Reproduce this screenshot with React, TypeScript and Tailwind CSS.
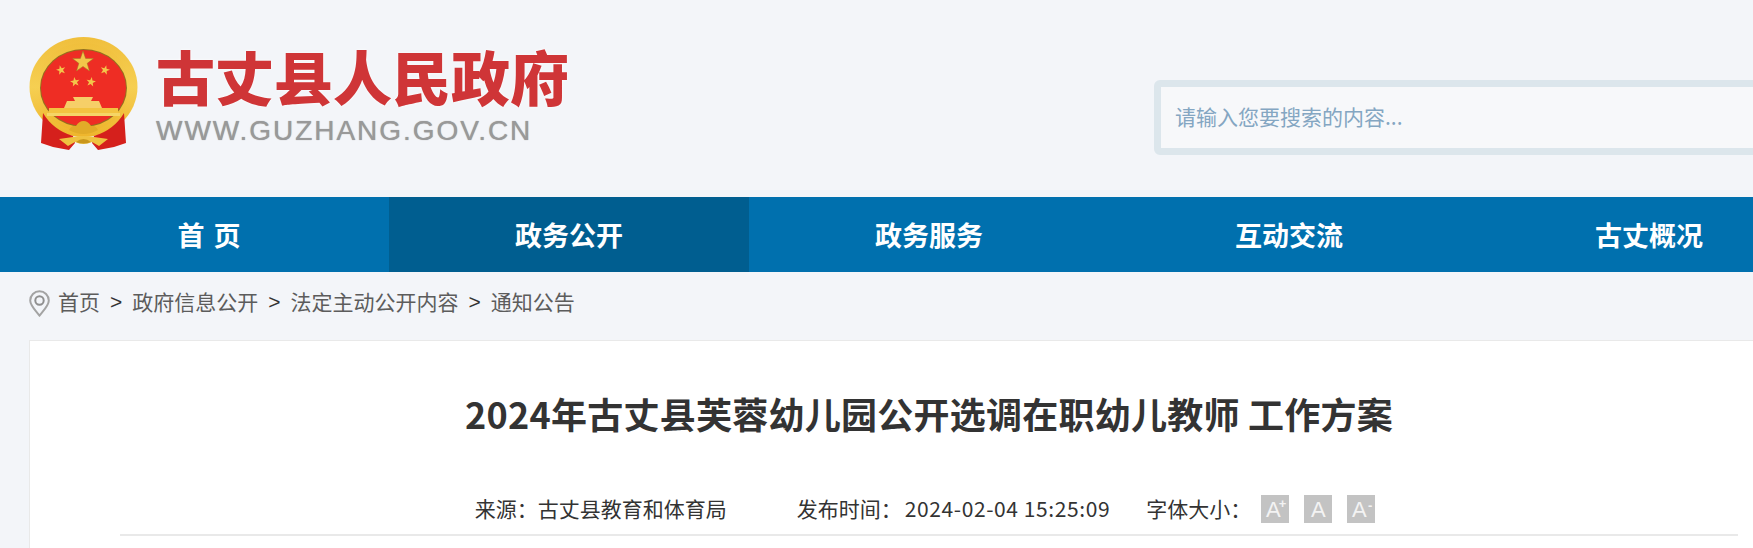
import React from "react";

const navItems = ["首 页", "政务公开", "政务服务", "互动交流", "古丈概况"];
const crumbs = ["首页", "政府信息公开", "法定主动公开内容", "通知公告"];

const star = (cx: number, cy: number, r: number, rot = 0) => {
  const pts: string[] = [];
  for (let i = 0; i < 10; i++) {
    const rad = i % 2 === 0 ? r : r * 0.4;
    const a = ((-90 + rot + i * 36) * Math.PI) / 180;
    pts.push(`${(cx + rad * Math.cos(a)).toFixed(2)},${(cy + rad * Math.sin(a)).toFixed(2)}`);
  }
  return pts.join(" ");
};

const Emblem = () => (
  <svg width="110" height="115" viewBox="0 0 110 115" className="shrink-0 blur-[0.5px]">
    <defs>
      <linearGradient id="gold" x1="0" y1="0" x2="0" y2="1">
        <stop offset="0" stopColor="#f0bf3c" />
        <stop offset="0.5" stopColor="#f6cf52" />
        <stop offset="1" stopColor="#eeb52c" />
      </linearGradient>
    </defs>
    {/* outer ring */}
    <ellipse cx="54.5" cy="50" rx="54" ry="50" fill="url(#gold)" />
    {/* ribbons */}
    <path d="M14 76 Q24 93 44 99 L46 106 L40 113 L24 110 L12 106 Z" fill="#d5201c" />
    <path d="M95 76 Q85 93 65 99 L63 106 L69 113 L85 110 L97 106 Z" fill="#d5201c" />
    {/* inner band and red field */}
    <ellipse cx="54.5" cy="50" rx="47" ry="44" fill="url(#gold)" />
    <ellipse cx="54.5" cy="51" rx="43.5" ry="39" fill="#93701f" />
    <ellipse cx="54.5" cy="51" rx="42.5" ry="38" fill="#ee2d24" />
    {/* stars */}
    <polygon points={star(54, 25, 11)} fill="#f3c64a" stroke="#9a7a22" strokeWidth="0.5" />
    <polygon points={star(32, 33, 5, -15)} fill="#f3c64a" />
    <polygon points={star(76, 33, 5, 15)} fill="#f3c64a" />
    <polygon points={star(46, 45, 5, -10)} fill="#f3c64a" />
    <polygon points={star(62, 45, 5, 10)} fill="#f3c64a" />
    {/* gate */}
    <path d="M44 60 L64 60 L62 64 L70 64 L73 71 L35 71 L38 64 L46 64 Z" fill="#f6cf68" />
    <rect x="20" y="71" width="69" height="5" fill="#f3c340" />
    <rect x="18" y="76" width="73" height="3" fill="#f5d566" />
    {/* wheel and sheaf */}
    <path d="M40 93 Q43 88 47 89 Q50 84 54.5 84 Q59 84 62 89 Q66 88 69 93 Q62 97 54.5 97 Q47 97 40 93 Z" fill="#e2ab28" />
    <path d="M30 102 L44 100 Q54.5 98 65 100 L79 102 L70 109 L63 105 Q54.5 109 46 105 L39 109 Z" fill="#efc240" />
    <path d="M47 105 Q54.5 99 62 105 Q54.5 108 47 105 Z" fill="#c9961c" />
  </svg>
);

const PinIcon = () => (
  <svg width="21" height="27" viewBox="0 0 21 27" className="shrink-0">
    <path d="M10.5 25.5 C6 20 1.2 15.5 1.2 10.5 A9.3 9.3 0 0 1 19.8 10.5 C19.8 15.5 15 20 10.5 25.5 Z" fill="none" stroke="#a3a3a3" strokeWidth="2" />
    <circle cx="10.5" cy="10.5" r="4.2" fill="none" stroke="#8f8f8f" strokeWidth="2" />
  </svg>
);

const FontButton = ({ sign }: { sign?: "+" | "-" }) => (
  <span className="relative flex h-[28px] w-[28px] items-center justify-center bg-[#c3c3c3] pt-[2px] text-[22px] leading-none text-[#f3f3f3] font-['Liberation_Sans',sans-serif]">
    <span className={sign ? "-ml-[4px]" : ""}>A</span>
    {sign && (
      <span className={`absolute right-[3px] text-[13px] font-bold leading-none ${sign === "-" ? "top-[4px]" : "top-[2px]"}`}>
        {sign}
      </span>
    )}
  </span>
);

export default function App() {
  return (
    <div className="h-[548px] w-[1753px] overflow-hidden bg-[#f3f5f9] font-['Noto_Sans_CJK_SC','Noto_Sans',sans-serif] text-[#333]">
      <div className="ml-[29px] w-[1800px]">
        <header className="flex h-[197px] items-start">
          <div className="mt-[37px] flex">
            <Emblem />
            <div className="ml-[17px] flex flex-col">
              <div className="mt-[-3px] h-[80px] text-[59px] font-black leading-[84px] whitespace-nowrap text-[#cf3537] [text-shadow:0_0_3px_#fff]">
                古丈县人民政府
              </div>
              <div className="mt-[1px] text-[28px] leading-[32px] tracking-[1.95px] whitespace-nowrap text-[#999] [text-shadow:0_0_1px_#999] font-['Liberation_Sans',sans-serif]">
                WWW.GUZHANG.GOV.CN
              </div>
            </div>
          </div>
          <div className="mt-[80px] ml-[585px] flex h-[75px] w-[660px] items-center rounded-[6px] border-[7px] border-[#dce6ec] bg-[#f7f8fa] pb-[2px] pl-[14px]">
            <span className="text-[21px] text-[#84a6c2]">请输入您要搜索的内容...</span>
          </div>
        </header>
      </div>

      <nav className="h-[75px] bg-[#0070ae] pl-[29px]">
        <ul className="flex w-[1800px]">
          {navItems.map((item, i) => (
            <li
              key={item}
              className={`flex h-[75px] w-[360px] items-center justify-center pt-[1px] text-[27px] font-bold text-white [word-spacing:3px] ${
                i === 1 ? "bg-[#005e90]" : ""
              }`}
            >
              {item}
            </li>
          ))}
        </ul>
      </nav>

      <div className="ml-[29px] w-[1800px]">
        <div className="flex h-[68px] items-center pb-[6px] text-[21px] text-[#5c5c5c]">
          <PinIcon />
          <span className="ml-[8px] -translate-y-px">{crumbs[0]}</span>
          {crumbs.slice(1).map((c) => (
            <React.Fragment key={c}>
              <span className="mx-[10px] -translate-y-px text-[#333] font-['Liberation_Sans',sans-serif]">&gt;</span>
              <span className="-translate-y-px">{c}</span>
            </React.Fragment>
          ))}
        </div>

        <main className="h-[300px] border border-[#e9e9e9] bg-white px-[90px]">
          <h1 className="mt-[44px] text-center text-[36px] font-bold leading-[56px] tracking-[0.25px] text-[#333]">
            2024年古丈县芙蓉幼儿园公开选调在职幼儿教师 工作方案
          </h1>
          <div className="mt-[41px] flex h-[54px] items-center justify-center border-b-2 border-[#e9e9e9] pt-[2px] pr-[8px] text-[21px] text-[#333]">
            <span>来源：古丈县教育和体育局</span>
            <span className="ml-[70px]">发布时间：</span>
            <span className="ml-[3px] tracking-[0.6px]">2024-02-04 15:25:09</span>
            <span className="ml-[36px]">字体大小：</span>
            <div className="ml-[10px] flex gap-[15px]">
              <FontButton sign="+" />
              <FontButton />
              <FontButton sign="-" />
            </div>
          </div>
        </main>
      </div>
    </div>
  );
}
